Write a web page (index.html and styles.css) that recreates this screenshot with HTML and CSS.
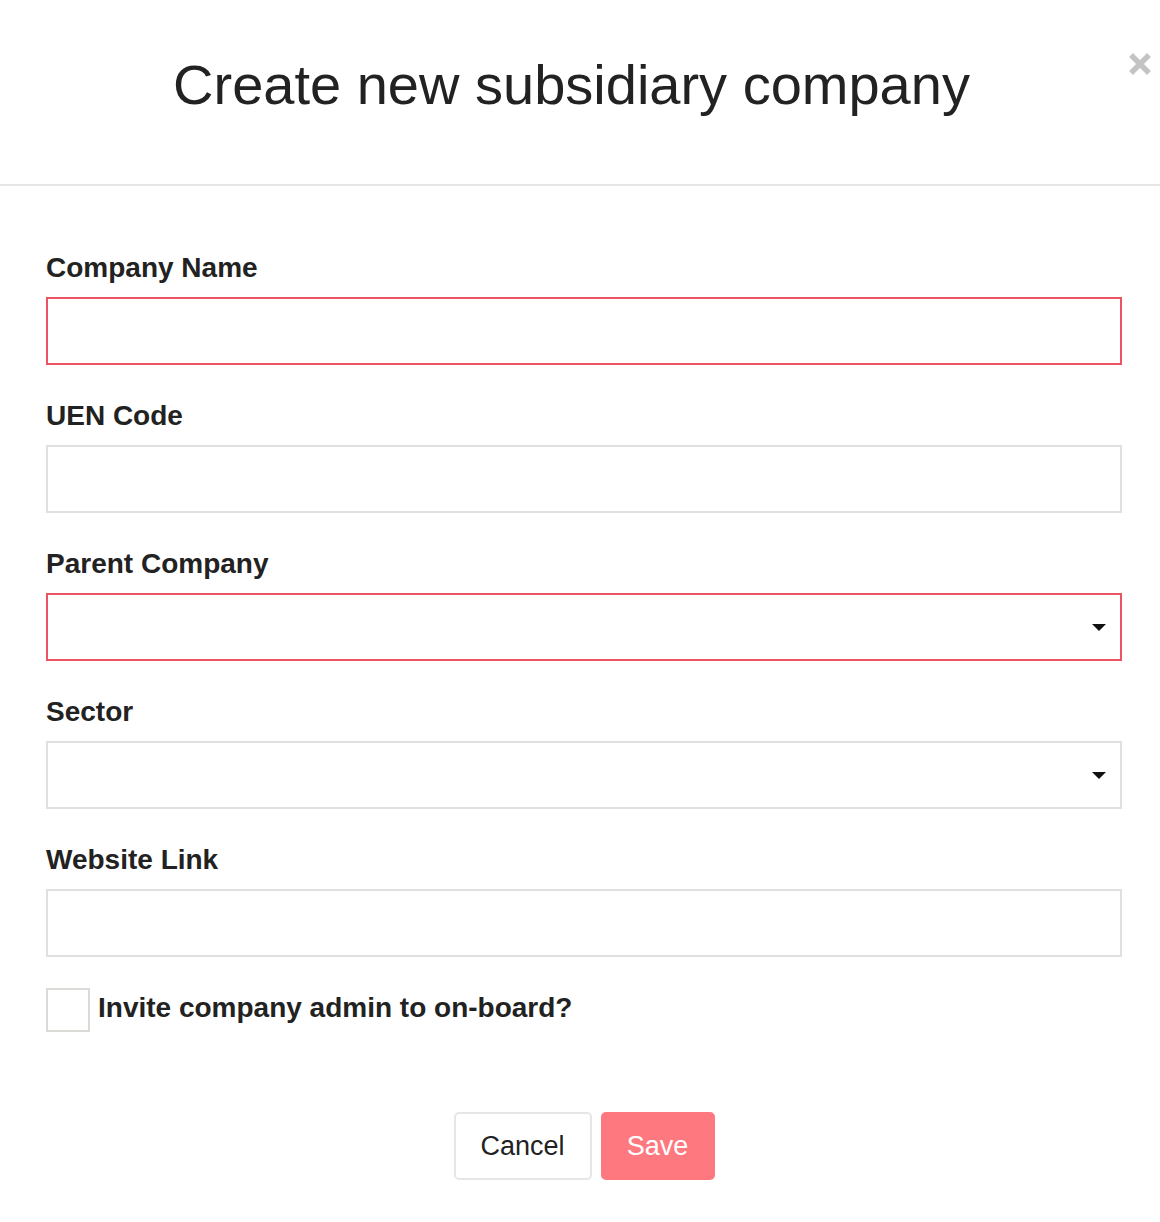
FILE: index.html
```html
<!DOCTYPE html>
<html>
<head>
<meta charset="utf-8">
<link rel="stylesheet" href="styles.css">
</head>
<body>
<div class="modal">
  <div class="modal-header">
    <h1 class="title">Create new subsidiary company</h1>
    <button class="close" aria-label="Close">
      <svg width="24" height="24" viewBox="0 0 24 24"><path d="M3 3 L21 21 M21 3 L3 21" stroke="#c4c4c4" stroke-width="5.5" stroke-linecap="butt"/></svg>
    </button>
  </div>
  <form class="modal-body">
    <div class="field">
      <label class="label">Company Name</label>
      <div class="input invalid"></div>
    </div>
    <div class="field">
      <label class="label">UEN Code</label>
      <div class="input"></div>
    </div>
    <div class="field">
      <label class="label">Parent Company</label>
      <div class="input select invalid"><span class="caret"></span></div>
    </div>
    <div class="field">
      <label class="label">Sector</label>
      <div class="input select"><span class="caret"></span></div>
    </div>
    <div class="field">
      <label class="label">Website Link</label>
      <div class="input"></div>
    </div>
    <div class="check-row">
      <span class="checkbox"></span>
      <span class="check-label">Invite company admin to on-board?</span>
    </div>
    <div class="actions">
      <button type="button" class="btn btn-cancel">Cancel</button>
      <button type="button" class="btn btn-save">Save</button>
    </div>
  </form>
</div>
</body>
</html>
```
FILE: styles.css
```css
html, body {
  margin: 0;
  padding: 0;
  background: #fff;
}
body {
  font-family: "Liberation Sans", Arial, Helvetica, sans-serif;
  color: #222;
}
.modal {
  position: relative;
  width: 1160px;
  height: 1222px;
  background: #fff;
}
.modal-header {
  height: 184px;
  border-bottom: 2px solid #e6e6e6;
  box-sizing: content-box;
  display: flex;
  align-items: flex-start;
  justify-content: center;
  padding-right: 17px;
}
.title {
  margin: 0;
  padding-top: 50px;
  font-size: 56px;
  font-weight: 400;
  line-height: 70px;
  color: #222;
}
.close {
  position: absolute;
  top: 52px;
  right: 8px;
  padding: 0;
  border: 0;
  background: none;
  width: 24px;
  height: 24px;
}
.close svg { display: block; }
.modal-body {
  padding: 60px 38px 0 46px;
  display: flex;
  flex-direction: column;
}
.field {
  display: flex;
  flex-direction: column;
  margin-bottom: 29px;
}
.label {
  font-size: 28px;
  font-weight: 700;
  line-height: 40px;
  color: #222;
  margin-top: 2px;
  margin-bottom: 9px;
}
.input {
  position: relative;
  height: 68px;
  box-sizing: border-box;
  border: 2px solid #e0e0e0;
  background: #fff;
}
.input.invalid {
  border-color: #ea5463;
}
.caret {
  position: absolute;
  right: 14px;
  top: 29px;
  width: 0;
  height: 0;
  border-left: 7px solid transparent;
  border-right: 7px solid transparent;
  border-top: 7px solid #111;
}
.check-row {
  display: flex;
  align-items: center;
  margin-top: 2px;
  height: 44px;
}
.checkbox {
  width: 44px;
  height: 44px;
  box-sizing: border-box;
  border: 2px solid #dcdad6;
  background: #fff;
  margin-right: 8px;
}
.check-label {
  font-size: 28px;
  font-weight: 700;
  color: #222;
  line-height: 40px;
  margin-top: -4px;
}
.actions {
  display: flex;
  justify-content: center;
  gap: 9px;
  margin-top: 80px;
}
.btn {
  height: 68px;
  box-sizing: border-box;
  font-family: "Liberation Sans", Arial, Helvetica, sans-serif;
  font-size: 27px;
  border-radius: 5px;
  cursor: pointer;
  padding: 0;
}
.btn-cancel {
  width: 138px;
  background: #fff;
  border: 2px solid #e6e6e6;
  color: #222;
}
.btn-save {
  width: 114px;
  background: #fe7880;
  border: 2px solid #fe7880;
  color: #fff;
}
```
